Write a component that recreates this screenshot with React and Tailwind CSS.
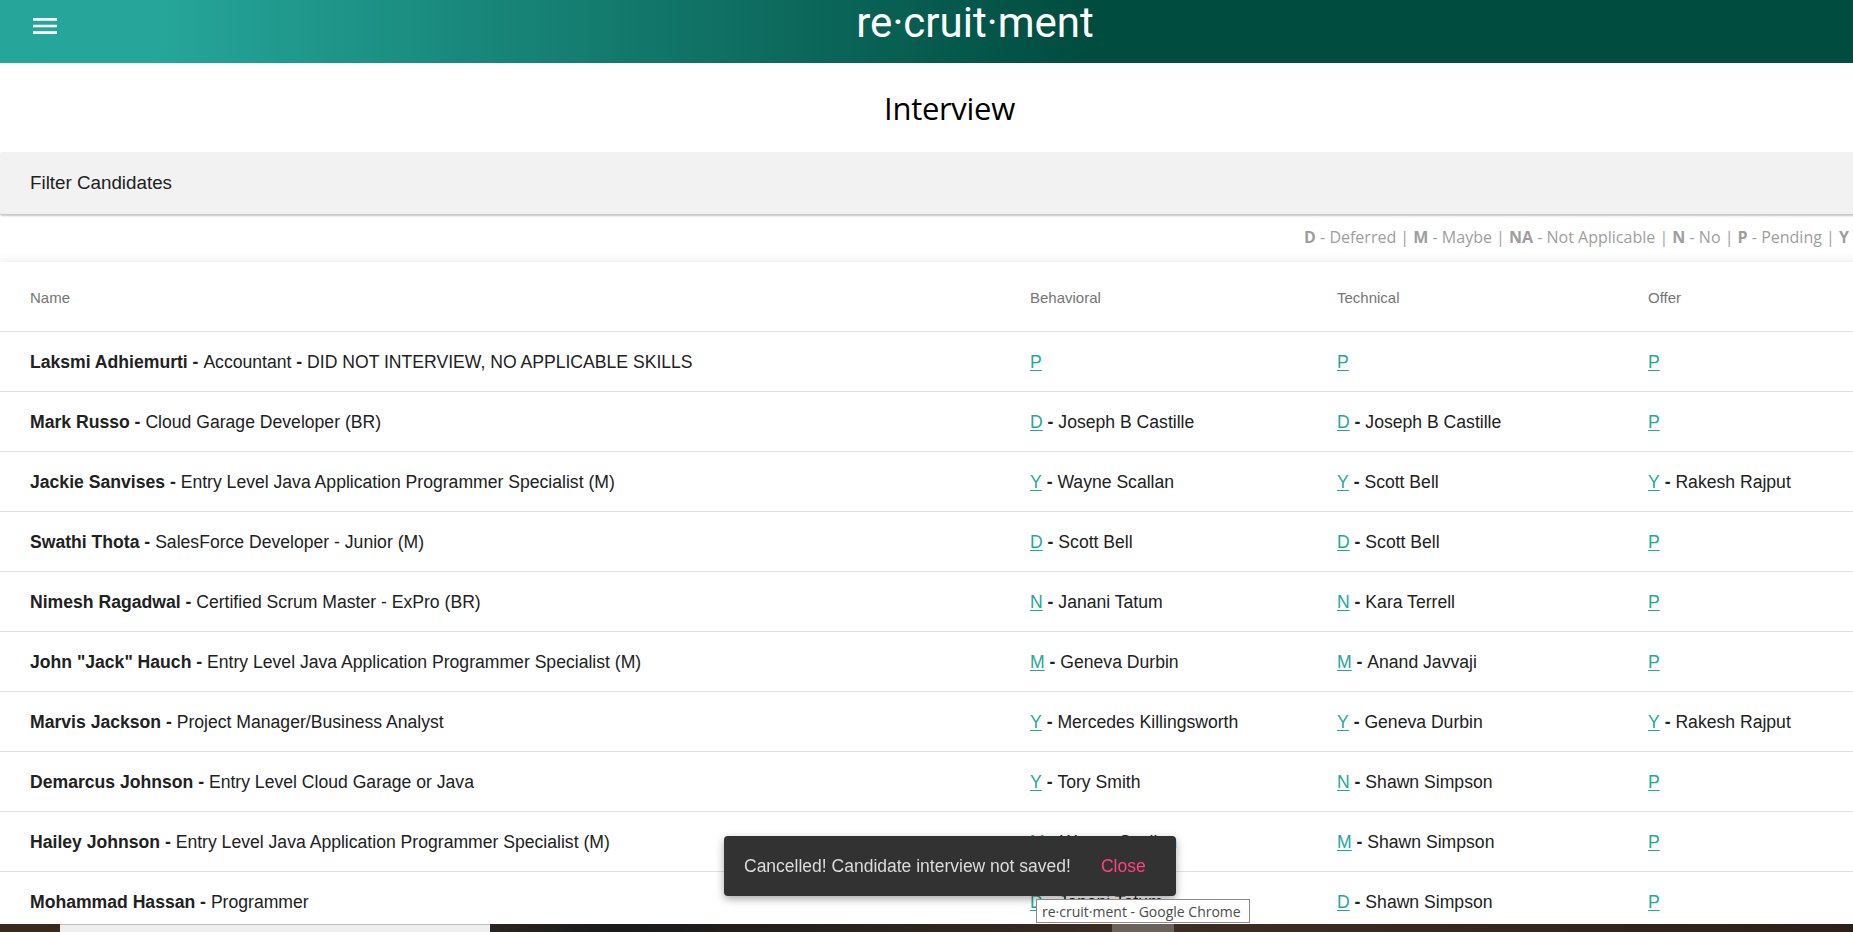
import React from 'react';

const rows = [
    { name: 'Laksmi Adhiemurti', title: 'Accountant', note: 'DID NOT INTERVIEW, NO APPLICABLE SKILLS', behavioral: ['P'], technical: ['P'], offer: ['P'] },
    { name: 'Mark Russo', title: 'Cloud Garage Developer (BR)', behavioral: ['D', 'Joseph B Castille'], technical: ['D', 'Joseph B Castille'], offer: ['P'] },
    { name: 'Jackie Sanvises', title: 'Entry Level Java Application Programmer Specialist (M)', behavioral: ['Y', 'Wayne Scallan'], technical: ['Y', 'Scott Bell'], offer: ['Y', 'Rakesh Rajput'] },
    { name: 'Swathi Thota', title: 'SalesForce Developer - Junior (M)', behavioral: ['D', 'Scott Bell'], technical: ['D', 'Scott Bell'], offer: ['P'] },
    { name: 'Nimesh Ragadwal', title: 'Certified Scrum Master - ExPro (BR)', behavioral: ['N', 'Janani Tatum'], technical: ['N', 'Kara Terrell'], offer: ['P'] },
    { name: 'John "Jack" Hauch', title: 'Entry Level Java Application Programmer Specialist (M)', behavioral: ['M', 'Geneva Durbin'], technical: ['M', 'Anand Javvaji'], offer: ['P'] },
    { name: 'Marvis Jackson', title: 'Project Manager/Business Analyst', behavioral: ['Y', 'Mercedes Killingsworth'], technical: ['Y', 'Geneva Durbin'], offer: ['Y', 'Rakesh Rajput'] },
    { name: 'Demarcus Johnson', title: 'Entry Level Cloud Garage or Java', behavioral: ['Y', 'Tory Smith'], technical: ['N', 'Shawn Simpson'], offer: ['P'] },
    { name: 'Hailey Johnson', title: 'Entry Level Java Application Programmer Specialist (M)', behavioral: ['M', 'Wayne Scallan'], technical: ['M', 'Shawn Simpson'], offer: ['P'] },
    { name: 'Mohammad Hassan', title: 'Programmer', behavioral: ['D', 'Janani Tatum'], technical: ['D', 'Shawn Simpson'], offer: ['P'] },
];

const legend = [
    ['D', 'Deferred'],
    ['M', 'Maybe'],
    ['NA', 'Not Applicable'],
    ['N', 'No'],
    ['P', 'Pending'],
    ['Y', 'Yes'],
];

const Status = ({ value }) => {
    const [code, who] = value;
    return (
        <span>
            <a href="#" className="text-[#26a69a] underline underline-offset-2">{code}</a>
            {who && (
                <>
                    <b> - </b>
                    {who}
                </>
            )}
        </span>
    );
};

const App = () => {
    return (
        <div className="relative h-screen w-screen overflow-hidden bg-white font-['Liberation_Sans',Arial,sans-serif] text-[#212121]">
            <div className="w-[1899px]">
                {/* top nav */}
                <header className="flex h-[63px] items-start bg-[linear-gradient(to_right,#26a69a_8%,#004d40_57%)]">
                    <div className="pl-[29px] pt-[10px]">
                        <svg width="32" height="32" viewBox="0 0 24 24" fill="#fff">
                            <path d="M3 18h18v-2H3v2zm0-5h18v-2H3v2zm0-7v2h18V6H3z" />
                        </svg>
                    </div>
                    <div className="flex flex-1 justify-center pr-[10px]">
                        <span className="font-['Roboto',sans-serif] text-[42px] leading-[45px] text-white">re·cruit·ment</span>
                    </div>
                </header>

                <h1 className="flex h-[89px] items-center justify-center pt-[2px] font-['Open_Sans',sans-serif] text-[31px] tracking-[-0.3px] text-black">
                    Interview
                </h1>

                <div className="relative z-10 flex h-[62px] items-center rounded-[2px] bg-[#f2f2f2] px-[30px] text-[18.8px] text-[#212121] shadow-[0_2px_2px_rgba(0,0,0,0.22)]">
                    Filter Candidates
                </div>

                <div className="flex h-[48px] items-center justify-end pb-[2px] pr-[11px] font-['Open_Sans',sans-serif] text-[16px] text-[#9e9e9e]">
                    <span className="whitespace-nowrap">
                        {legend.map(([k, v], i) => (
                            <React.Fragment key={k}>
                                <b>{k}</b>{' - '}{v}
                                {i < legend.length - 1 ? ' | ' : ''}
                            </React.Fragment>
                        ))}
                    </span>
                </div>

                <div className="bg-white shadow-[0_-2px_8px_rgba(0,0,0,0.07)]">
                    <div className="grid h-[70px] grid-cols-[1000px_307px_311px_1fr] items-center border-b border-[#e0e0e0] pl-[30px] pt-[4px] text-[15px] text-[#757575]">
                        <div>Name</div>
                        <div>Behavioral</div>
                        <div>Technical</div>
                        <div>Offer</div>
                    </div>
                    {rows.map((r) => (
                        <div key={r.name} className="grid h-[60px] grid-cols-[1000px_307px_311px_1fr] items-center border-b border-[#e0e0e0] pl-[30px] pt-[1px] text-[17.6px]">
                            <div>
                                <b>{r.name} - </b>
                                {r.title}
                                {r.note && (
                                    <>
                                        <b> - </b>
                                        {r.note}
                                    </>
                                )}
                            </div>
                            <div><Status value={r.behavioral} /></div>
                            <div><Status value={r.technical} /></div>
                            <div><Status value={r.offer} /></div>
                        </div>
                    ))}
                </div>
            </div>

            {/* toast */}
            <div className="fixed left-[724px] top-[836px] flex h-[60px] w-[452px] items-center rounded-[4px] bg-[#323232] pl-[20px] text-[17.5px] text-[#dcdcdc] shadow-[0_3px_8px_rgba(0,0,0,0.35)]">
                <span>Cancelled! Candidate interview not saved!</span>
                <span className="ml-[30px] text-[#ff4081]">Close</span>
            </div>

            {/* chrome tooltip */}
            <div className="fixed left-[1036px] top-[899px] flex h-[24px] w-[214px] items-center border border-[#8a8a8a] bg-white px-[5px] font-['Open_Sans',sans-serif] text-[14px] text-[#4a4a4a]">
                re·cruit·ment - Google Chrome
            </div>

            {/* desktop strip below the window */}
            <div className="fixed bottom-0 left-0 flex h-[8px] w-full">
                <div className="w-[60px] bg-[#3a2a1e]" />
                <div className="w-[430px] border-t border-[#bdbdbd] bg-[#efefef]" />
                <div className="w-[622px] bg-[linear-gradient(to_right,#2a2520,#1a1a1a_20%,#3a2c22)]" />
                <div className="w-[62px] bg-[#6b625b]" />
                <div className="flex-1 bg-[linear-gradient(to_right,#3d2c22,#2e2018)]" />
            </div>
        </div>
    );
};

export default App;
